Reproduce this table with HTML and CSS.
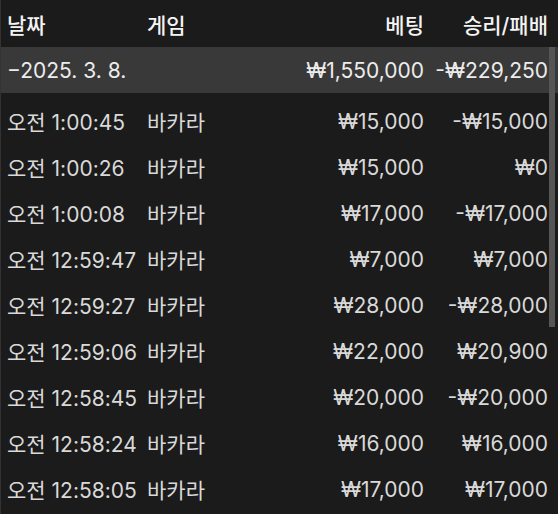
FILE: index.html
```html
<!DOCTYPE html>
<html lang="ko">
<head>
<meta charset="utf-8">
<link rel="stylesheet" href="styles.css">
</head>
<body>
<div class="table">
  <div class="row head">
    <div>날짜</div><div>게임</div><div class="r">베팅</div><div class="r">승리/패배</div>
  </div>
  <div class="row group">
    <div class="date">−2025. 3. 8.</div><div></div><div class="r">₩1,550,000</div><div class="r">-₩229,250</div>
  </div>
  <div class="body">
    <div class="row"><div>오전 1:00:45</div><div>바카라</div><div class="r">₩15,000</div><div class="r">-₩15,000</div></div>
    <div class="row"><div>오전 1:00:26</div><div>바카라</div><div class="r">₩15,000</div><div class="r">₩0</div></div>
    <div class="row"><div>오전 1:00:08</div><div>바카라</div><div class="r">₩17,000</div><div class="r">-₩17,000</div></div>
    <div class="row"><div>오전 12:59:47</div><div>바카라</div><div class="r">₩7,000</div><div class="r">₩7,000</div></div>
    <div class="row"><div>오전 12:59:27</div><div>바카라</div><div class="r">₩28,000</div><div class="r">-₩28,000</div></div>
    <div class="row"><div>오전 12:59:06</div><div>바카라</div><div class="r">₩22,000</div><div class="r">₩20,900</div></div>
    <div class="row"><div>오전 12:58:45</div><div>바카라</div><div class="r">₩20,000</div><div class="r">-₩20,000</div></div>
    <div class="row"><div>오전 12:58:24</div><div>바카라</div><div class="r">₩16,000</div><div class="r">₩16,000</div></div>
    <div class="row"><div>오전 12:58:05</div><div>바카라</div><div class="r">₩17,000</div><div class="r">₩17,000</div></div>
  </div>
  <div class="scrollbar"></div>
</div>
</body>
</html>
```

FILE: styles.css
```css
html, body {
  margin: 0;
  padding: 0;
  background: #1b1b1b;
}
body {
  width: 558px;
  height: 514px;
  overflow: hidden;
  font-family: "Inter", "Noto Sans CJK KR", sans-serif;
  font-size: 21px;
  color: #d9d9d9;
}
.table {
  position: relative;
  height: 514px;
  border-left: 1px solid #333;
}
.row {
  display: grid;
  grid-template-columns: 140px 157px 120px 124px;
  padding-left: 6px;
  height: 46px;
  align-items: center;
  white-space: nowrap;
}
.r { text-align: right; }
.head {
  height: 47px;
  color: #f4f4f4;
  font-weight: 500;
  font-size: 21px;
}
.group {
  background: #393939;
  color: #ececec;
}
.body {
  padding-top: 5px;
}
.scrollbar {
  position: absolute;
  left: 548px;
  top: 47px;
  width: 6px;
  height: 280px;
  background: #555;
}
```
